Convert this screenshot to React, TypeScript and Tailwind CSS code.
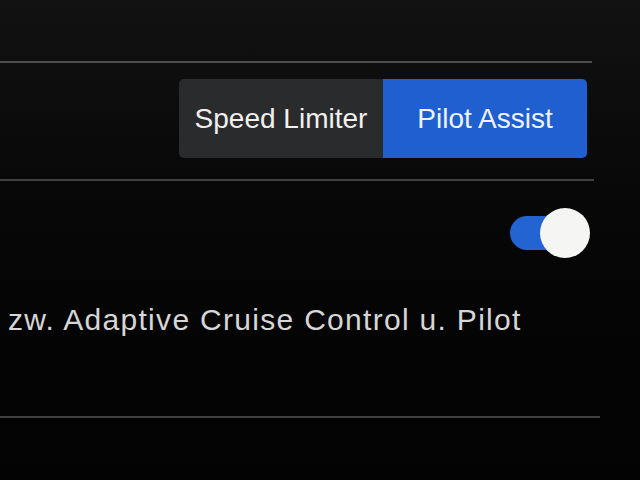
export default function App() {
  return (
    <div
      className="w-[640px] h-[480px] overflow-hidden bg-gradient-to-b from-[#111211] via-[#060606] to-[#030303] text-white"
      style={{ fontFamily: '"Liberation Sans", Arial, sans-serif' }}
    >
      {/* top divider */}
      <div className="h-[61px]" />
      <div className="h-[2px] w-[592px] bg-[#4d4f4e]" />

      {/* mode selector */}
      <div className="flex justify-end pr-[53px] pt-[16px]">
        <div className="flex h-[79px] overflow-hidden rounded-[5px]">
          <button className="w-[204px] bg-[#2a2b2d] text-[28px] text-[#f2f0ee]">Speed Limiter</button>
          <button className="w-[204px] bg-[#1f5fcf] text-[28px] text-[#eef2fb]">Pilot Assist</button>
        </div>
      </div>

      <div className="mt-[21px] h-[2px] w-[594px] bg-[#3e403f]" />

      {/* toggle */}
      <div className="flex justify-end pr-[50px] pt-[27px]">
        <div className="relative h-[50px] w-[80px]">
          <div className="absolute left-0 top-[8px] h-[34px] w-[70px] rounded-full bg-[#2463d2]" />
          <div className="absolute right-0 top-0 h-[50px] w-[50px] rounded-full bg-[#f5f5f3]" />
        </div>
      </div>

      <div className="mt-[45px] pl-[8px] text-[30px] leading-[34px] tracking-[1.3px] text-[#d6d6d6] whitespace-nowrap">
        zw. Adaptive Cruise Control u. Pilot
      </div>

      <div className="mt-[79px] h-[2px] w-[600px] bg-[#3f4140]" />
    </div>
  );
}
